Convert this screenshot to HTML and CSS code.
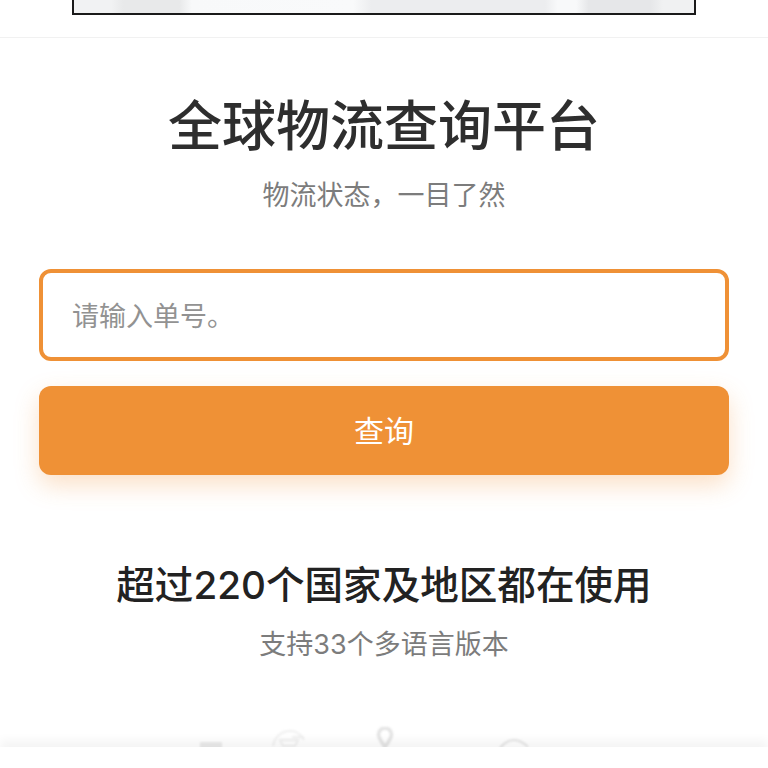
FILE: index.html
```html
<!DOCTYPE html>
<html lang="zh-CN">
<head>
    <meta charset="UTF-8">
    <meta name="viewport" content="width=device-width, initial-scale=1.0">
    <title>全球物流查询平台</title>
    <link rel="stylesheet" href="styles.css">
</head>
<body>
    <div class="banner-wrap">
        <div class="banner"></div>
    </div>

    <div class="search">
        <h1>全球物流查询平台</h1>
        <p class="sub">物流状态，一目了然</p>
        <div class="input-box">请输入单号。</div>
        <button class="query-btn">查询</button>
    </div>

    <div class="coverage">
        <h2>超过220个国家及地区都在使用</h2>
        <p class="sub-lang">支持33个多语言版本</p>
        <div class="icons">
            <svg class="icon-box" width="22" height="12" viewBox="0 0 22 12"><path d="M0 5h22v7H0z" fill="#d8d8d8"/></svg>
            <svg class="icon-globe" width="34" height="20" viewBox="0 0 34 20" fill="none" stroke="#e0e0e0" stroke-width="2"><path d="M1 17C3 7 10 2 18 2c6 0 11 3 14 9"/><path d="M8 11h18l-3 6H11zM20 8h12"/></svg>
            <svg class="icon-pin" width="18" height="22" viewBox="0 0 18 22" fill="none" stroke="#c8c8c8" stroke-width="3.5"><path d="M9 20C4 13 2.500 10 2.500 7.500a6.500 6.500 0 0 1 13 0C15.500 10 14 13 9 20z"/></svg>
            <svg class="icon-arc" width="30" height="12" viewBox="0 0 30 12" fill="none" stroke="#c8c8c8" stroke-width="2"><path d="M1 11C6 5 10 3 15 3s9 2 14 7"/></svg>
        </div>
    </div>

    <div class="bottom-fade"></div>
</body>
</html>
```
FILE: styles.css
```css
html, body {
    margin: 0;
    height: 768px;
    overflow: hidden;
}

body {
    position: relative;
    background: #fff;
    font-family: Inter, "Noto Sans CJK SC", sans-serif;
    color: #2b2b2b;
}

.banner-wrap {
    height: 37px;
    border-bottom: 1px solid #f1f1f1;
    display: flex;
    justify-content: center;
    align-items: flex-start;
}

.banner {
    width: 620px;
    height: 13px;
    border: 2px solid #1a1a1a;
    border-top: none;
    background: linear-gradient(90deg, #f1f2f3 0%, #f1f2f3 6%, #e8e9ea 8%, #e8e9ea 17%, #f8f9fa 19%, #f9fafb 45%, #ecedef 48%, #ecedef 76%, #f8f9fa 78%, #f8f9fa 81%, #e6e7e9 83%, #e6e7e9 93%, #f0f1f2 95%, #f0f1f2 100%);
}

.search {
    padding: 0 39px;
    text-align: center;
}

h1 {
    margin: 50px 0 0;
    font-size: 54px;
    line-height: 78px;
    font-weight: 500;
    color: #2e2e2e;
}

.sub {
    margin: 10px 0 0;
    font-size: 27px;
    line-height: 40px;
    color: #7c7c7c;
}

.input-box {
    margin-top: 53px;
    height: 92px;
    box-sizing: border-box;
    border: 4px solid #ef9136;
    border-radius: 12px;
    padding-left: 29px;
    font-size: 27px;
    line-height: 88px;
    text-align: left;
    color: #929292;
    background: #fff;
}

.query-btn {
    display: block;
    width: 100%;
    height: 89px;
    margin-top: 25px;
    padding: 0 0 4px;
    border: none;
    border-radius: 12px;
    background: #ef9136;
    color: #fff;
    font-family: inherit;
    font-size: 30px;
    box-shadow: 0 10px 24px rgba(239, 145, 54, 0.28);
}

.coverage {
    text-align: center;
}

h2 {
    margin: 80px 0 0;
    font-size: 38.6px;
    line-height: 60px;
    font-weight: 500;
    color: #222;
}

.sub-lang {
    margin: 10px 0 0;
    font-size: 27px;
    line-height: 40px;
    color: #7c7c7c;
}

.icons {
    display: flex;
    align-items: flex-end;
    height: 22px;
    margin-top: 62px;
    padding-left: 200px;
    opacity: 0.5;
    filter: blur(0.8px);
}

.icon-globe {
    margin-left: 50px;
}

.icon-pin {
    margin-left: 70px;
}

.icon-arc {
    margin-left: 105px;
}

.bottom-fade {
    position: absolute;
    left: 0;
    right: 0;
    bottom: 0;
    height: 21px;
    background: #fff;
    box-shadow: 0 -7px 10px rgba(0, 0, 0, 0.045);
}
```
